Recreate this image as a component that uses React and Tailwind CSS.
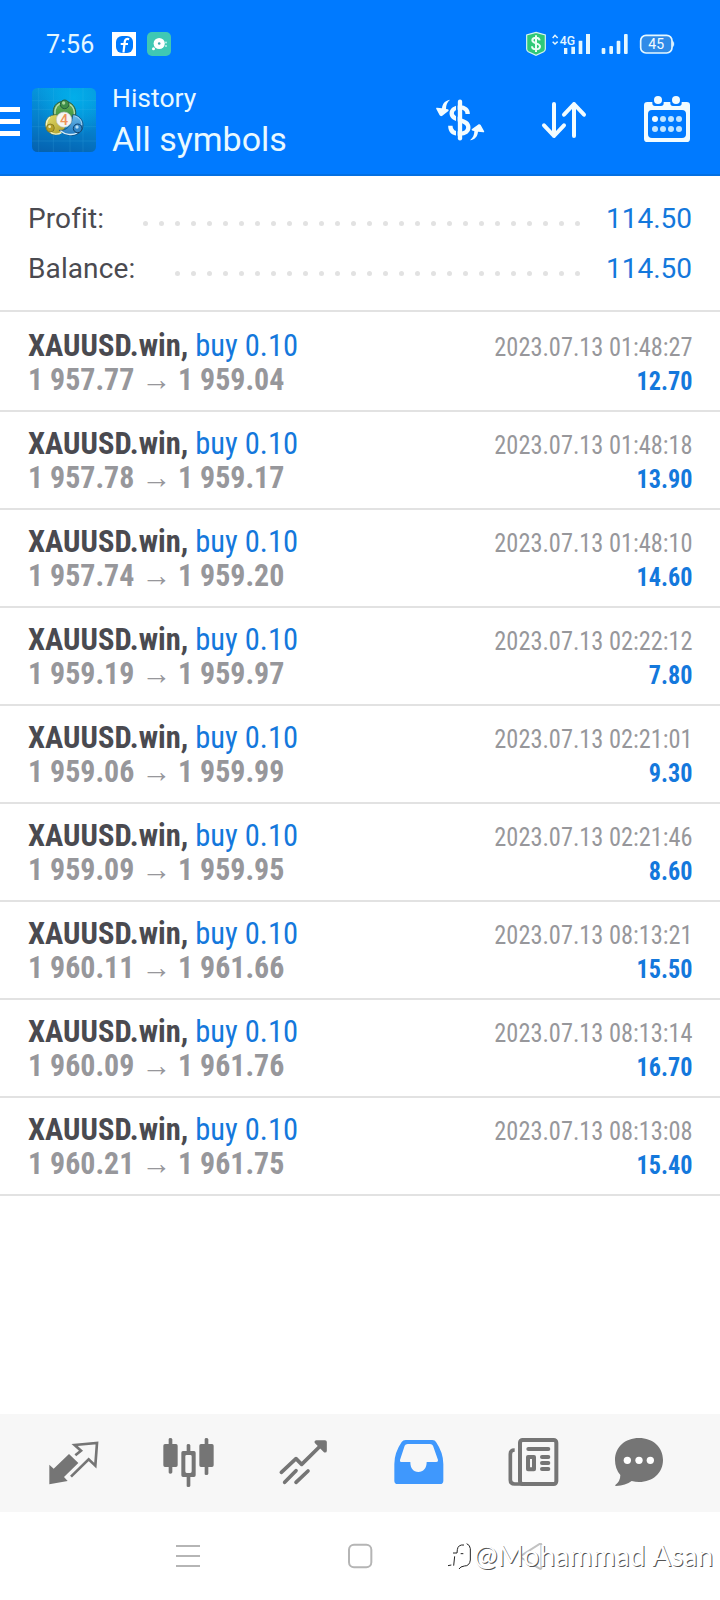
import React from 'react';

const deals = [
  ['1 957.77', '1 959.04', '2023.07.13 01:48:27', '12.70'],
  ['1 957.78', '1 959.17', '2023.07.13 01:48:18', '13.90'],
  ['1 957.74', '1 959.20', '2023.07.13 01:48:10', '14.60'],
  ['1 959.19', '1 959.97', '2023.07.13 02:22:12', '7.80'],
  ['1 959.06', '1 959.99', '2023.07.13 02:21:01', '9.30'],
  ['1 959.09', '1 959.95', '2023.07.13 02:21:46', '8.60'],
  ['1 960.11', '1 961.66', '2023.07.13 08:13:21', '15.50'],
  ['1 960.09', '1 961.76', '2023.07.13 08:13:14', '16.70'],
  ['1 960.21', '1 961.75', '2023.07.13 08:13:08', '15.40'],
];

function StatusBar() {
  return (
    <div className="flex h-[78px] items-center pt-[10px] pl-[46px] text-[#e4f7ff]">
      <span className="w-[66px] pt-px text-[25px] leading-[28px]">7:56</span>
      <svg className="h-6 w-6" viewBox="0 0 24 24">
        <path d="M0 0h24v24H0z" fill="#fff" />
        <rect x="4" y="4" width="17" height="17" rx="6" fill="#007aff" />
        <path d="M17.2 7.2c-3-.9-4.200.3-4.500 2.800L11.500 20.500M8.700 12h7.300" stroke="#fff" strokeWidth="2.200" fill="none" />
      </svg>
      <svg className="ml-[11px] h-6 w-6" viewBox="0 0 24 24">
        <rect width="24" height="24" rx="5" fill="#3fc8b4" />
        <circle cx="12.200" cy="11.500" r="5.600" fill="#fff" />
        <circle cx="12.200" cy="11.500" r="1.300" fill="#3fa8b0" />
        <circle cx="6.500" cy="16.800" r="1.500" fill="#fff" />
        <circle cx="19" cy="10.500" r=".9" fill="#c9f3ec" />
        <circle cx="19" cy="14" r=".9" fill="#c9f3ec" />
      </svg>
      <svg className="ml-[354px] h-[26px] w-[22px]" viewBox="75 33 66 78">
        <path d="M108 37l28 8v42q0 5-5 8l-23 11-23-11q-5-3-5-8V45z" fill="#2fc978" stroke="#d5f5ee" strokeWidth="3.500" />
        <path d="M119 61c-1-5-5-8-11-8-7 0-11 4-11 8 0 11 23 7 23 18 0 6-5 9-12 9-7 0-12-3-12-9M108 46v50" fill="none" stroke="#eafff6" strokeWidth="6" />
      </svg>
      <svg className="ml-[3px] h-[26px] w-[42px]" viewBox="150 33 126 78" fill="#e4f7ff">
        <path d="M158 54l7-8 8 8M158 65l7 7 8-7" fill="none" stroke="#e4f7ff" strokeWidth="4.500" />
        <path d="M192 84h10v18h-10zM214 80h11v22h-11zM236 62h11v40h-11zM258 42h12v60h-12z" />
        <text x="179" y="76" fontSize="40" fontWeight="500" fontFamily="Roboto, sans-serif" textLength="46" lengthAdjust="spacingAndGlyphs">4G</text>
      </svg>
      <svg className="ml-[8px] h-[26px] w-[30px]" viewBox="300 33 90 78" fill="#e4f7ff">
        <rect x="305" y="84" width="11" height="18" rx="3" />
        <rect x="328" y="78" width="11" height="24" rx="3" />
        <rect x="350" y="62" width="11" height="40" rx="3" />
        <rect x="372" y="42" width="11" height="60" rx="3" />
      </svg>
      <svg className="ml-[9px] h-[26px] w-[36px]" viewBox="417 33 108 78">
        <rect x="422" y="46" width="94" height="53" rx="16" fill="#2f8be8" stroke="#e4f7ff" strokeWidth="5" />
        <path d="M517 62q5 3 5 10t-5 10z" fill="#e4f7ff" stroke="#e4f7ff" />
        <text x="445" y="87" fontSize="42" fill="#f4fcff" fontFamily="Roboto, sans-serif">45</text>
      </svg>
    </div>
  );
}

function AppLogo() {
  return (
    <svg className="ml-3 h-16 w-16" viewBox="96 204 192 192">
      <defs>
        <linearGradient id="tile" x1="0.200" y1="0" x2="0" y2="1">
          <stop offset="0" stopColor="#0696dc" />
          <stop offset="0.500" stopColor="#057fcb" />
          <stop offset="1" stopColor="#0560ae" />
        </linearGradient>
        <radialGradient id="glow" cx="0.650" cy="0.150" r="0.600">
          <stop offset="0" stopColor="#02aeea" />
          <stop offset="1" stopColor="#02aeea" stopOpacity="0" />
        </radialGradient>
        <linearGradient id="lime" x2="0" y2="1">
          <stop offset="0" stopColor="#6fb058" />
          <stop offset="1" stopColor="#3c9440" />
        </linearGradient>
        <linearGradient id="gold" x2="1" y2="1">
          <stop offset="0" stopColor="#e8e06a" />
          <stop offset="1" stopColor="#a8992a" />
        </linearGradient>
        <linearGradient id="sky" x2="0" y2="1">
          <stop offset="0" stopColor="#6dbcec" />
          <stop offset="1" stopColor="#1f78c0" />
        </linearGradient>
      </defs>
      <rect x="96" y="204" width="192" height="192" rx="16" fill="url(#tile)" />
      <rect x="96" y="204" width="192" height="192" rx="16" fill="url(#glow)" />
      <path d="M96 242h192M96 268h192M96 320h192M96 363h192M116 204v192M160 204v192M210 204v192M249 204v192" stroke="#58c4ee" strokeWidth="1.500" opacity=".3" />
      <path d="M161 286c-6-24 8-42 31-42 24 0 38 18 35 42-6 8-18 6-24-2-8-10-24-10-28 6-4 6-12 4-14-4z" fill="url(#lime)" stroke="#2a5c4a" strokeWidth="3" />
      <path d="M165 283c-2-20 8-34 27-34 20 0 32 14 31 34" fill="none" stroke="#b9dcae" strokeWidth="4" />
      <circle cx="166" cy="314" r="30" fill="url(#gold)" stroke="#4a6a4a" strokeWidth="2" />
      <path d="M150 291c-13 10-15 30-3 42s28 11 38 4" fill="none" stroke="#f0f2c4" strokeWidth="4" />
      <path d="M218 284c18 1 31 14 31 31 0 19-15 31-33 31-15 0-29-6-38-15 15 1 38-6 40-47z" fill="url(#sky)" stroke="#163f66" strokeWidth="2" />
      <path d="M181 332c14 12 36 15 50 7" stroke="#d3ecfa" strokeWidth="4" fill="none" />
      <path d="M224 288c14 4 22 15 21 27" stroke="#a6d6f4" strokeWidth="3" fill="none" />
      <circle cx="194" cy="253" r="13" fill="#3f8f48" stroke="#245e41" strokeWidth="3" />
      <circle cx="151" cy="324" r="12" fill="#b5a02a" stroke="#6f6b1d" strokeWidth="2" />
      <circle cx="233" cy="325" r="13" fill="#2f86c9" stroke="#13436d" strokeWidth="3" />
      <circle cx="191" cy="249" r="5" fill="#a8d49a" />
      <circle cx="149" cy="320" r="4" fill="#f3ecb0" />
      <circle cx="231" cy="321" r="5" fill="#b5dcf5" />
      <circle cx="192" cy="299" r="23" fill="#f5f5f1" stroke="#b9c3c0" strokeWidth="2" />
      <text x="192" y="314" textAnchor="middle" fontSize="43" fontWeight="500" fill="#ee9358" fontFamily="Roboto, sans-serif">4</text>
    </svg>
  );
}

function Header() {
  return (
    <header className="h-[176px] border-b-2 border-[#0470e2] bg-[#007aff]">
      <StatusBar />
      <div className="flex h-[83px] items-start">
        <div className="mt-[29px] flex w-5 flex-col gap-[7px]">
          <i className="h-[5px] bg-white" />
          <i className="h-[5px] bg-white" />
          <i className="h-[5px] bg-white" />
        </div>
        <div className="pt-[10px]">
          <AppLogo />
        </div>
        <div className="ml-4 flex-1 text-[#e9f9ff]">
          <div className="text-[26.5px] leading-[39px]">History</div>
          <div className="text-[34px] leading-[44px]">All symbols</div>
        </div>
        <svg className="mt-[10px] h-16 w-[50px]" viewBox="45 24 150 192" fill="none" stroke="#f2fcff" strokeWidth="13">
          <path d="M143 102c0-13-9-20-23-20s-25 7-25 18c0 25 50 15 50 42 0 12-10 19-25 19-18 0-29-7-29-24" />
          <path d="M110.500 70v100" stroke="#007aff" strokeWidth="5" />
          <path d="M120 65v110" strokeLinecap="round" />
          <path d="M90 59c-16 3-23 13-24 26l-15-2c-3 0-3 2-2 4l10 19c2 3 5 3 8 1l18-14c2-2 1-4-2-5l-5-1c0-12 3-20 12-28z" fill="#f2fcff" stroke="none" />
          <path d="M150 181c16-3 23-13 24-26l16 2c3 0 3-2 2-4l-10-18c-2-3-5-3-8-1l-18 13c-2 2-1 4 2 5l5 1c0 12-4 20-13 28z" fill="#f2fcff" stroke="none" />
        </svg>
        <svg className="mt-[10px] ml-[55px] h-16 w-12" viewBox="360 24 144 192" fill="none" stroke="#f2fcff" strokeWidth="12" strokeLinecap="round" strokeLinejoin="round">
          <path d="M402 72v96M372 136l30 32 30-32M462 168V72M432 104l30-32 30 32" />
        </svg>
        <svg className="mt-[10px] mr-7 ml-[54px] h-16 w-[50px]" viewBox="666 24 150 192">
          <path fillRule="evenodd" d="M682 66H800q10 0 10 10V176q0 10-10 10H682q-10 0-10-10V76q0-10 10-10zM696 90q-12 0-12 12v60q0 12 12 12h90q12 0 12-12v-60q0-12-12-12z" fill="#f2fcff" />
          <path d="M697 62h34v8q0 8-8 8h-18q-8 0-8-8zM751 62h34v8q0 8-8 8h-18q-8 0-8-8z" fill="#007aff" />
          <g fill="#f2fcff">
            <circle cx="714" cy="60" r="12" />
            <circle cx="768" cy="60" r="12" />
            <circle cx="705" cy="117" r="9" />
          </g>
          <g fill="#bfe4ff">
            <circle cx="729" cy="117" r="9" />
            <circle cx="753" cy="117" r="9" />
            <circle cx="777" cy="117" r="9" />
            <circle cx="705" cy="147" r="9" />
            <circle cx="729" cy="147" r="9" />
            <circle cx="753" cy="147" r="9" />
            <circle cx="777" cy="147" r="9" />
          </g>
        </svg>
      </div>
    </header>
  );
}

function SummaryRow({ label, dots }) {
  return (
    <div className="flex h-[50px] items-center justify-between pr-7 pl-7 text-[28px] leading-[50px]">
      <span className="flex-1 tracking-[0.1px] text-[#4a4a50]">{label}</span>
      <span className="mt-[9px] mr-[27px] flex gap-[11px]">
        {Array.from({ length: dots }, (_, i) => (
          <i key={i} className="h-[5px] w-[5px] rounded-full bg-[#e2e2e2]" />
        ))}
      </span>
      <span className="flex w-[85px] justify-end whitespace-nowrap text-[#1478dc]">114.50</span>
    </div>
  );
}

function Deal({ deal }) {
  const [open, close, time, profit] = deal;
  return (
    <div className="flex h-[98px] justify-between border-b-2 border-[#e2e2e2] pr-[27px] pl-7 whitespace-nowrap [font-stretch:75%]">
      <div className="pt-[14px] text-[32px] leading-[34px] font-bold">
        <div className="origin-left scale-x-[0.954] text-[#4a4a50]">
          XAUUSD.win, <span className="font-normal text-[#1478dc]">buy 0.10</span>
        </div>
        <div className="origin-left scale-x-[0.935] text-[#97979b]">
          {open} <span className="font-normal">→</span> {close}
        </div>
      </div>
      <div className="pt-4 text-right text-[26px] leading-[34px]">
        <div className="origin-right scale-x-[0.937] text-[#97979b]">{time}</div>
        <div className="origin-right scale-x-[0.93] font-bold text-[#1478dc]">{profit}</div>
      </div>
    </div>
  );
}

function TabBar() {
  return (
    <nav className="flex h-[98px] items-start bg-[#f7f7f7] pt-[22px] pl-[48px] text-[#757575]">
      <svg className="h-[52px] w-[52px]" viewBox="54 48 156 156">
        <path d="M117 102l28 27-43 42 11 12-55 10V134l13 12z" fill="currentColor" />
        <path d="M123 170l53-52 20 19 5-68-67 6 19 17-17 14" fill="none" stroke="currentColor" strokeWidth="8" />
      </svg>
      <svg className="ml-[62px] h-[52px] w-[52px]" viewBox="396 48 156 156" fill="currentColor">
        <path d="M416 58q0-4 5-4t6 4v14h11q5 0 5 5v59q0 5-5 5h-11v16q0 4-6 4t-5-4v-16h-11q-5 0-5-5V77q0-5 5-5h11zM524 58q0-4 5-4t6 4v14h11q5 0 5 5v59q0 5-5 5h-11v20q0 4-6 4t-5-4v-20h-11q-5 0-5-5V77q0-5 5-5h11z" />
        <path fillRule="evenodd" d="M470 76q0-4 5-4t6 4v17h11q5 0 5 5v68q0 5-5 5h-11v26q0 4-6 4t-5-4v-26h-11q-5 0-5-5V98q0-5 5-5h11zM470 105q-4 0-4 4v45q0 5 4 5h11q4 0 4-5v-45q0-4-4-4z" />
      </svg>
      <svg className="ml-[64px] h-[52px] w-[52px]" viewBox="54 48 156 156" fill="none" stroke="currentColor" strokeWidth="11" strokeLinecap="round" strokeLinejoin="round">
        <path d="M64 157l44-41 17 17 65-64M74 187l34-35M108 187l36-34" />
        <path d="M169 66h26v26z" fill="currentColor" />
      </svg>
      <svg className="ml-[63px] h-[52px] w-[52px]" viewBox="398 48 156 156" fill="#3f98fd">
        <path fillRule="evenodd" d="M436 60h80q8 0 11 6 22 32 22 66v50q0 10-10 10H412q-10 0-10-10v-50q0-34 22-66 4-6 12-6zM442 72q-7 0-9 5l-14 43q-2 6 4 6h27c0 19 9 30 24 30s25-11 25-30h29q6 0 5-6l-15-43q-2-5-9-5z" />
      </svg>
      <svg className="ml-[61px] h-[52px] w-[54px]" viewBox="79 48 162 156" fill="none" stroke="currentColor">
        <rect x="121" y="60" width="109" height="132" rx="8" strokeWidth="12" />
        <path d="M105 90q-13 0-13 12v78q0 12 13 12h30" strokeWidth="11" />
        <path d="M146 87h60M187 111h19M187 129h19M187 147h19" strokeWidth="12" strokeLinecap="round" />
        <rect x="145" y="111" width="18" height="37" strokeWidth="12" strokeLinejoin="round" />
      </svg>
      <svg className="ml-[53px] h-[52px] w-[52px]" viewBox="399 48 156 156">
        <path d="M477 54c42 0 72 28 72 66s-30 66-72 66q-10 0-22-3-18 14-47 15-4 0-2-3 15-11 15-30-16-18-16-45c0-38 30-66 72-66z" fill="currentColor" />
        <circle cx="442" cy="121" r="11" fill="#fff" />
        <circle cx="477" cy="121" r="11" fill="#fff" />
        <circle cx="511" cy="121" r="11" fill="#fff" />
      </svg>
    </nav>
  );
}

function SystemNav() {
  return (
    <div className="relative flex h-[88px] items-start pt-[31px] pl-[174px]">
      <svg className="h-[26px] w-[28px]" viewBox="72 94 84 78" stroke="#b5b5b5" strokeWidth="6">
        <path d="M78 103h72M78 133h72M78 163h72" />
      </svg>
      <svg className="ml-[144px] h-[26px] w-[28px]" viewBox="588 69 84 78">
        <rect x="597" y="74" width="67" height="68" rx="15" fill="none" stroke="#b5b5b5" strokeWidth="6" />
      </svg>
      <svg className="ml-[144px] h-[32px] w-[28px]" viewBox="294 69 84 96">
        <path d="M364 74v70q-1 4-5 2l-54-32q-5-5 0-8l54-34q5-2 5 2z" fill="none" stroke="#c2c2c2" strokeWidth="6" />
      </svg>
      <div className="absolute top-[26px] left-[448px] flex items-center whitespace-nowrap">
        <svg className="h-7 w-[26px]" viewBox="84 72 78 84" fill="none" stroke="#222" strokeWidth="3">
          <path d="M140 80q10 4 11 15v34q-2 18-18 18-12 1-17 10M132 84q-18-2-20 14l-1 10h-12M104 118l-3 28M84 146l10-2M122 110h8" />
        </svg>
        <span className="font-['Lato'] text-[28px] leading-[34px] tracking-[0.18px] text-white [text-shadow:1px_1px_0_#555]">@Mohammad Asan</span>
      </div>
    </div>
  );
}

export default function App() {
  return (
    <div className="flex h-[1600px] w-[720px] flex-col overflow-hidden bg-white font-['Roboto',sans-serif]">
      <Header />
      <section className="h-[136px] border-b-2 border-[#e2e2e2] pt-[18px]">
        <SummaryRow label="Profit:" dots={28} />
        <SummaryRow label="Balance:" dots={26} />
      </section>
      <main className="flex-1 pt-[2px]">
        {deals.map((deal) => (
          <Deal key={deal[2]} deal={deal} />
        ))}
      </main>
      <TabBar />
      <SystemNav />
    </div>
  );
}
